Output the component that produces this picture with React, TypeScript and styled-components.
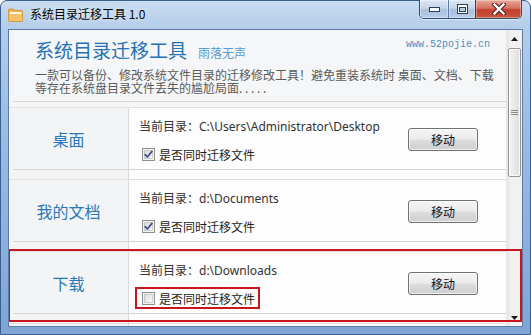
import styled, { createGlobalStyle } from 'styled-components';

const GlobalStyle = createGlobalStyle`
  html, body {
    margin: 0;
    padding: 0;
    overflow: hidden;
    background: #ffffff;
  }
  * {
    box-sizing: border-box;
  }
`;

const CJK = `"Noto Sans CJK SC", "Noto Sans", sans-serif`;

const Window = styled.div`
  width: 531px;
  height: 335px;
  border: 1px solid #3b5f8f;
  border-radius: 7px 7px 0 0;
  background: linear-gradient(
    180deg,
    #c9dcf1 0px,
    #b3cce9 28px,
    #9dbde4 120px,
    #7ea5d6 335px
  );
  display: flex;
  flex-direction: column;
  padding: 0 7px 7px 7px;
  font-family: ${CJK};
`;

const TitleBar = styled.div`
  height: 28px;
  flex-shrink: 0;
  display: flex;
  align-items: flex-start;
`;

const AppIcon = styled.svg`
  margin-top: 7px;
  flex-shrink: 0;
`;

const Caption = styled.div`
  margin-left: 7px;
  margin-top: 5px;
  font-size: 12px;
  line-height: 16px;
  color: #000;
  text-shadow: 0 0 6px rgba(255, 255, 255, 0.9);
`;

const Controls = styled.div`
  margin-left: auto;
  margin-right: 1px;
  margin-top: -1px;
  display: flex;
  height: 19px;
  border: 1px solid #2f4d75;
  border-top: none;
  border-radius: 0 0 5px 5px;
  overflow: hidden;
  box-shadow: 0 1px 0 rgba(255, 255, 255, 0.5);
`;

const ControlButton = styled.div<{ $w: number; $close?: boolean }>`
  width: ${(p) => p.$w}px;
  height: 100%;
  display: flex;
  align-items: center;
  justify-content: center;
  border-left: ${(p) => (p.$close ? '1px solid #5a2a2a' : '1px solid #5f7ea6')};
  box-shadow: inset 0 0 0 1px rgba(255, 255, 255, 0.35);
  background: ${(p) =>
    p.$close
      ? 'linear-gradient(180deg, #e8a89c 0%, #d6715f 45%, #c2412d 55%, #c9553e 100%)'
      : 'linear-gradient(180deg, #dce7f4 0%, #c3d4ea 45%, #a9bfdd 55%, #b9cde7 100%)'};
  &:first-child {
    border-left: none;
  }
`;

const Client = styled.div`
  position: relative;
  flex: 1;
  display: flex;
  border: 1px solid #5b7ca6;
  background: #f5f6f8;
  overflow: hidden;
`;

const Content = styled.div`
  flex: 1;
  display: flex;
  flex-direction: column;
  overflow: hidden;
`;

const Header = styled.div`
  flex-shrink: 0;
  height: 71px;
  padding: 8px 16px 0 26px;
  display: flex;
  flex-direction: column;
`;

const TitleRow = styled.div`
  display: flex;
  align-items: baseline;
`;

const AppTitle = styled.div`
  font-size: 19px;
  line-height: 24px;
  color: #2471b3;
`;

const Author = styled.div`
  margin-left: 11px;
  font-size: 12px;
  line-height: 16px;
  color: #5b9bd0;
`;

const Site = styled.div`
  margin-left: auto;
  align-self: flex-start;
  margin-top: 1px;
  font-family: "Liberation Mono", "DejaVu Sans Mono", monospace;
  font-size: 10px;
  line-height: 12px;
  color: #4f8fc3;
`;

const Description = styled.div`
  margin-top: 6px;
  font-size: 12px;
  line-height: 13px;
  color: #5a5a5a;
  white-space: nowrap;
`;

const HeaderRule = styled.div`
  flex-shrink: 0;
  height: 1px;
  margin-left: 4px;
  background: #d6d6d6;
`;

const List = styled.div`
  flex-shrink: 0;
  margin-top: 5px;
  display: flex;
  flex-direction: column;
`;

const Row = styled.div`
  flex-shrink: 0;
  border-top: 1px solid #e0e0e0;
  background: linear-gradient(
    to right,
    #f2f4f6 0px,
    #f2f4f6 119px,
    #dadada 119px,
    #dadada 120px,
    #fdfdfd 120px
  );
  display: flex;
  flex-direction: column;
`;

const Cells = styled.div`
  height: 61px;
  display: grid;
  grid-template-columns: 120px 1fr;
`;

const FolderName = styled.div`
  display: flex;
  align-items: center;
  justify-content: center;
  padding-right: 1px;
  font-size: 16px;
  color: #2a78b9;
`;

const Detail = styled.div`
  display: flex;
  align-items: flex-start;
  padding-left: 10px;
  padding-right: 28px;
`;

const Info = styled.div`
  flex: 1;
  padding-top: 11px;
  display: flex;
  flex-direction: column;
`;

const PathText = styled.div`
  font-family: "Noto Sans", "Noto Sans CJK SC", sans-serif;
  font-size: 12px;
  line-height: 16px;
  color: #333;
  white-space: nowrap;
`;

const CheckRow = styled.div`
  position: relative;
  align-self: flex-start;
  margin-top: 13px;
  margin-left: 3px;
  height: 13px;
  display: flex;
  align-items: center;
  gap: 4px;
  font-size: 12px;
  color: #222;
`;

const Marker = styled.div`
  position: absolute;
  border: 2px solid #c8161f;
  pointer-events: none;
`;

const CheckMarker = styled(Marker)`
  inset: -5px -5px -4px -7px;
`;

const RowMarker = styled(Marker)`
  left: -1px;
  top: 219px;
  width: 514px;
  height: 73px;
`;

const MoveButton = styled.button`
  margin-top: 20px;
  width: 70px;
  height: 23px;
  border: 1px solid #707070;
  border-radius: 3px;
  background: linear-gradient(180deg, #f4f4f4 0%, #ececec 48%, #dddddd 52%, #cfcfcf 100%);
  box-shadow: inset 0 0 0 1px rgba(255, 255, 255, 0.7);
  font-family: ${CJK};
  font-size: 12px;
  color: #111;
  padding: 0;
`;

const RowRule = styled.div`
  height: 1px;
  margin-left: 4px;
  background: #d4d4d4;
`;

const RowGap = styled.div`
  height: 9px;
`;

const ScrollBar = styled.div`
  width: 16px;
  display: flex;
  flex-direction: column;
  background: linear-gradient(90deg, #e6e6e6, #f2f2f2 30%, #f0f0f0);
  border-left: 1px solid #e8e8e8;
`;

const ScrollArrow = styled.div`
  height: 17px;
  flex-shrink: 0;
  display: flex;
  align-items: center;
  justify-content: center;
`;

const Thumb = styled.div`
  flex-shrink: 0;
  margin: 1px 1px 0 1px;
  height: 129px;
  border: 1px solid #959595;
  border-radius: 2px;
  background: linear-gradient(90deg, #f4f4f4 0%, #e9e9e9 50%, #dcdcdc 100%);
  box-shadow: inset 0 0 0 1px rgba(255, 255, 255, 0.8);
  display: flex;
  align-items: center;
  justify-content: center;
`;

const Track = styled.div`
  flex: 1;
`;

type Folder = {
  name: string;
  path: string;
  checked: boolean;
  marked?: boolean;
};

const folders: Folder[] = [
  { name: '桌面', path: 'C:\\Users\\Administrator\\Desktop', checked: true },
  { name: '我的文档', path: 'd:\\Documents', checked: true },
  { name: '下载', path: 'd:\\Downloads', checked: false, marked: true },
];

function CheckBox({ checked }: { checked: boolean }) {
  return (
    <svg width="13" height="13" viewBox="0 0 13 13">
      <defs>
        <linearGradient id="cbg" x1="0" y1="0" x2="1" y2="1">
          <stop offset="0" stopColor="#d9d9d9" />
          <stop offset="1" stopColor="#fbfbfb" />
        </linearGradient>
      </defs>
      <rect x="0.5" y="0.5" width="12" height="12" fill="#f4f4f4" stroke="#8e8f8f" />
      <rect x="2.5" y="2.5" width="8" height="8" fill="url(#cbg)" stroke="#b5b5b5" strokeWidth="0.6" />
      {checked && (
        <path
          d="M3.2 6.6 L5.4 9 L9.9 3.4"
          fill="none"
          stroke="#3d4f8a"
          strokeWidth="1.7"
          strokeLinecap="round"
          strokeLinejoin="round"
        />
      )}
    </svg>
  );
}

export default function App() {
  return (
    <>
      <GlobalStyle />
      <Window>
        <TitleBar>
          <AppIcon width="15" height="14" viewBox="0 0 15 14">
            <path d="M0.5 2 Q0.5 1 1.5 1 H5.5 L7 2.5 H13.5 Q14.5 2.5 14.5 3.5 V12.5 Q14.5 13.5 13.5 13.5 H1.5 Q0.5 13.5 0.5 12.5 Z" fill="#f0b54e" stroke="#c98a2a" strokeWidth="0.8" />
            <rect x="1.5" y="4" width="12" height="2.2" fill="#fff4da" />
            <rect x="0.9" y="6.6" width="13.2" height="6.5" fill="#f7c36a" />
          </AppIcon>
          <Caption>系统目录迁移工具 1.0</Caption>
          <Controls>
            <ControlButton $w={28}>
              <svg width="11" height="6" viewBox="0 0 11 6">
                <rect x="0.5" y="1.5" width="10" height="4" fill="#fff" stroke="#2d3f5c" />
              </svg>
            </ControlButton>
            <ControlButton $w={27}>
              <svg width="11" height="10" viewBox="0 0 11 10">
                <rect x="0.5" y="0.5" width="10" height="9" fill="#fff" stroke="#2d3f5c" />
                <rect x="2.5" y="3.5" width="6" height="4" fill="#b9cbe3" stroke="#2d3f5c" />
              </svg>
            </ControlButton>
            <ControlButton $w={46} $close>
              <svg width="14" height="12" viewBox="0 0 14 12">
                <path d="M2.5 1.5 L11.5 10.5 M11.5 1.5 L2.5 10.5" stroke="#4a1d1d" strokeWidth="4.4" strokeLinecap="square" />
                <path d="M2.5 1.5 L11.5 10.5 M11.5 1.5 L2.5 10.5" stroke="#ffffff" strokeWidth="2.4" strokeLinecap="square" />
              </svg>
            </ControlButton>
          </Controls>
        </TitleBar>
        <Client>
          <Content>
            <Header>
              <TitleRow>
                <AppTitle>系统目录迁移工具</AppTitle>
                <Author>雨落无声</Author>
                <Site>www.52pojie.cn</Site>
              </TitleRow>
              <Description>
                一款可以备份、修改系统文件目录的迁移修改工具！避免重装系统时 桌面、文档、下载
                <br />
                等存在系统盘目录文件丢失的尴尬局面. . . . .
              </Description>
            </Header>
            <HeaderRule />
            <List>
              {folders.map((f) => (
                <Row key={f.name}>
                  <Cells>
                    <FolderName>{f.name}</FolderName>
                    <Detail>
                      <Info>
                        <PathText>当前目录：{f.path}</PathText>
                        <CheckRow>
                          <CheckBox checked={f.checked} />
                          <span>是否同时迁移文件</span>
                          {f.marked && <CheckMarker />}
                        </CheckRow>
                      </Info>
                      <MoveButton>移动</MoveButton>
                    </Detail>
                  </Cells>
                  <RowRule />
                  <RowGap />
                </Row>
              ))}
              <Row>
                <Cells />
              </Row>
            </List>
          </Content>
          <ScrollBar>
            <ScrollArrow>
              <svg width="7" height="4" viewBox="0 0 7 4">
                <path d="M0 4 L3.5 0 L7 4 Z" fill="#1a1a1a" />
              </svg>
            </ScrollArrow>
            <Thumb>
              <svg width="7" height="6" viewBox="0 0 7 6">
                <path d="M0 0.5 H7 M0 2.5 H7 M0 4.5 H7" stroke="#8a8a8a" strokeWidth="1" />
              </svg>
            </Thumb>
            <Track />
            <ScrollArrow>
              <svg width="7" height="4" viewBox="0 0 7 4">
                <path d="M0 0 L7 0 L3.5 4 Z" fill="#1a1a1a" />
              </svg>
            </ScrollArrow>
          </ScrollBar>
          <RowMarker />
        </Client>
      </Window>
    </>
  );
}
